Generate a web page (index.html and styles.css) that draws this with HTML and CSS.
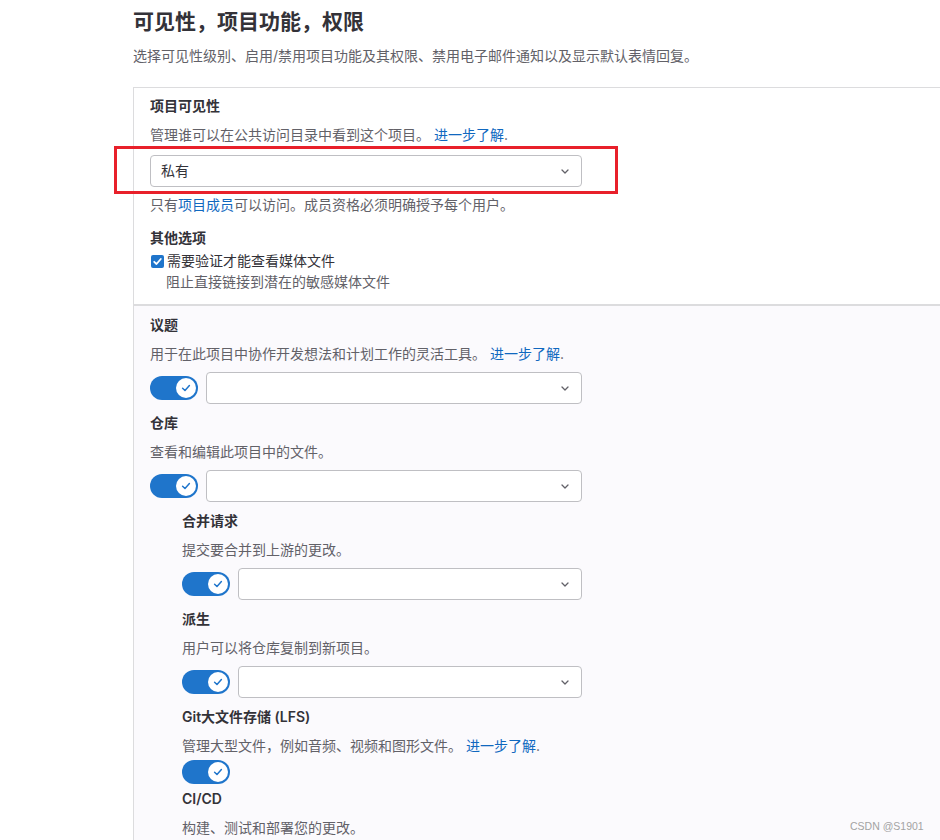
FILE: index.html
```html
<!DOCTYPE html>
<html lang="zh">
<head>
<meta charset="utf-8">
<title>可见性，项目功能，权限</title>
<link rel="stylesheet" href="styles.css">
</head>
<body>
<div class="page">
  <h2 class="title">可见性，项目功能，权限</h2>
  <p class="lead">选择可见性级别、启用/禁用项目功能及其权限、禁用电子邮件通知以及显示默认表情回复。</p>

  <div class="box">
    <section class="visibility">
      <div class="label">项目可见性</div>
      <div class="help gap9">管理谁可以在公共访问目录中看到这个项目。 <a class="link" href="#">进一步了解</a>.</div>
      <div class="select vis-select">
        <span class="select-text">私有</span>
        <svg class="chev" width="8" height="5" viewBox="0 0 8 5"><path d="M1 1 L4 4 L7 1" fill="none" stroke="#626168" stroke-width="1.3" stroke-linecap="round" stroke-linejoin="round"/></svg>
      </div>
      <div class="help gap8">只有<a class="link" href="#">项目成员</a>可以访问。成员资格必须明确授予每个用户。</div>
      <div class="label gap13">其他选项</div>
      <div class="check-row">
        <span class="checkbox"><svg width="13" height="13" viewBox="0 0 13 13"><path d="M3.2 6.8 L5.5 9 L9.8 4" fill="none" stroke="#fff" stroke-width="1.8" stroke-linecap="round" stroke-linejoin="round"/></svg></span>
        <span class="check-label">需要验证才能查看媒体文件</span>
      </div>
      <div class="help check-help">阻止直接链接到潜在的敏感媒体文件</div>
    </section>

    <section class="features">
      <div class="feature">
        <div class="label">议题</div>
        <div class="help gap9">用于在此项目中协作开发想法和计划工作的灵活工具。 <a class="link" href="#">进一步了解</a>.</div>
        <div class="row">
          <span class="toggle"><span class="knob"><svg width="12" height="12" viewBox="0 0 12 12"><path d="M2.6 6.2 L5 8.5 L9.4 3.6" fill="none" stroke="#1f75cb" stroke-width="1.5" stroke-linecap="round" stroke-linejoin="round"/></svg></span></span>
          <div class="select"><svg class="chev" width="8" height="5" viewBox="0 0 8 5"><path d="M1 1 L4 4 L7 1" fill="none" stroke="#626168" stroke-width="1.3" stroke-linecap="round" stroke-linejoin="round"/></svg></div>
        </div>
      </div>

      <div class="feature">
        <div class="label">仓库</div>
        <div class="help gap9">查看和编辑此项目中的文件。</div>
        <div class="row">
          <span class="toggle"><span class="knob"><svg width="12" height="12" viewBox="0 0 12 12"><path d="M2.6 6.2 L5 8.5 L9.4 3.6" fill="none" stroke="#1f75cb" stroke-width="1.5" stroke-linecap="round" stroke-linejoin="round"/></svg></span></span>
          <div class="select"><svg class="chev" width="8" height="5" viewBox="0 0 8 5"><path d="M1 1 L4 4 L7 1" fill="none" stroke="#626168" stroke-width="1.3" stroke-linecap="round" stroke-linejoin="round"/></svg></div>
        </div>
      </div>

      <div class="sub">
        <div class="feature">
          <div class="label">合并请求</div>
          <div class="help gap9">提交要合并到上游的更改。</div>
          <div class="row">
            <span class="toggle"><span class="knob"><svg width="12" height="12" viewBox="0 0 12 12"><path d="M2.6 6.2 L5 8.5 L9.4 3.6" fill="none" stroke="#1f75cb" stroke-width="1.5" stroke-linecap="round" stroke-linejoin="round"/></svg></span></span>
            <div class="select"><svg class="chev" width="8" height="5" viewBox="0 0 8 5"><path d="M1 1 L4 4 L7 1" fill="none" stroke="#626168" stroke-width="1.3" stroke-linecap="round" stroke-linejoin="round"/></svg></div>
          </div>
        </div>

        <div class="feature">
          <div class="label">派生</div>
          <div class="help gap9">用户可以将仓库复制到新项目。</div>
          <div class="row">
            <span class="toggle"><span class="knob"><svg width="12" height="12" viewBox="0 0 12 12"><path d="M2.6 6.2 L5 8.5 L9.4 3.6" fill="none" stroke="#1f75cb" stroke-width="1.5" stroke-linecap="round" stroke-linejoin="round"/></svg></span></span>
            <div class="select"><svg class="chev" width="8" height="5" viewBox="0 0 8 5"><path d="M1 1 L4 4 L7 1" fill="none" stroke="#626168" stroke-width="1.3" stroke-linecap="round" stroke-linejoin="round"/></svg></div>
          </div>
        </div>

        <div class="feature">
          <div class="label">Git大文件存储 (LFS)</div>
          <div class="help gap9">管理大型文件，例如音频、视频和图形文件。 <a class="link" href="#">进一步了解</a>.</div>
          <div class="row row-toggle">
            <span class="toggle"><span class="knob"><svg width="12" height="12" viewBox="0 0 12 12"><path d="M2.6 6.2 L5 8.5 L9.4 3.6" fill="none" stroke="#1f75cb" stroke-width="1.5" stroke-linecap="round" stroke-linejoin="round"/></svg></span></span>
          </div>
        </div>

        <div class="feature">
          <div class="label">CI/CD</div>
          <div class="help gap9">构建、测试和部署您的更改。</div>
        </div>
      </div>
    </section>
  </div>
</div>

<div class="annotation"></div>
<div class="watermark">CSDN @S1901</div>
</body>
</html>
```

FILE: styles.css
```css
html, body {
  margin: 0;
  padding: 0;
  overflow: hidden;
  background: #ffffff;
}

body {
  position: relative;
  height: 840px;
  font-family: Inter, "Noto Sans CJK SC", "Noto Sans", sans-serif;
  font-size: 14px;
  line-height: 20px;
  color: #333238;
}

.page {
  padding: 8px 0 0 133px;
}

.title {
  margin: 0;
  font-size: 21px;
  line-height: 28px;
  font-weight: 700;
  color: #333238;
}

.lead {
  margin: 10px 0 0;
  color: #626168;
}

.box {
  margin-top: 21px;
  border-top: 1px solid #dcdcde;
  border-left: 1px solid #dcdcde;
}

.visibility {
  padding: 8px 16px 12px;
  background: #ffffff;
}

.label {
  font-weight: 600;
  color: #333238;
}

.help {
  color: #626168;
}

.gap8 { margin-top: 8px; }
.gap9 { margin-top: 9px; }
.gap13 { margin-top: 13px; }

.link {
  color: #1068bf;
  text-decoration: none;
}

.select {
  box-sizing: border-box;
  height: 32px;
  border: 1px solid #bfbfc3;
  border-radius: 4px;
  background: #ffffff;
  display: flex;
  align-items: center;
  padding: 0 12px 0 10px;
}

.select-text {
  flex: 1;
  color: #333238;
}

.chev {
  margin-left: auto;
  display: block;
}

.vis-select {
  width: 432px;
  margin-top: 10px;
}

.check-row {
  margin-top: 3px;
  display: flex;
  align-items: center;
  gap: 3px;
}

.checkbox {
  width: 13px;
  height: 13px;
  margin-left: 1px;
  border-radius: 2px;
  background: #1f75cb;
  display: flex;
}

.check-label {
  color: #333238;
}

.check-help {
  margin-top: 1px;
  padding-left: 16px;
}

.features {
  border-top: 2px solid #dcdcde;
  background: #fbfafd;
  padding: 9px 16px 40px;
}

.sub {
  padding-left: 32px;
}

.feature {
  width: 432px;
  margin-bottom: 9px;
}

.sub .feature {
  width: 400px;
}

.row {
  margin-top: 8px;
  display: flex;
  align-items: center;
  gap: 8px;
}

.row .select {
  flex: 1;
}

.row-toggle {
  margin-top: 4px;
  margin-bottom: -4px;
}

.toggle {
  box-sizing: border-box;
  width: 48px;
  height: 24px;
  border-radius: 12px;
  background: #1f75cb;
  display: flex;
  align-items: center;
  justify-content: flex-end;
  padding-right: 2px;
  flex: none;
}

.knob {
  width: 20px;
  height: 20px;
  border-radius: 50%;
  background: #ffffff;
  display: flex;
  align-items: center;
  justify-content: center;
}

.annotation {
  position: absolute;
  left: 114px;
  top: 146px;
  width: 504px;
  height: 48px;
  box-sizing: border-box;
  border: 3px solid #e8202a;
}

.watermark {
  position: absolute;
  left: 850px;
  top: 818px;
  font-family: "Liberation Sans", Arial, sans-serif;
  font-size: 10.5px;
  line-height: 16px;
  color: #a3a3a3;
}
```
